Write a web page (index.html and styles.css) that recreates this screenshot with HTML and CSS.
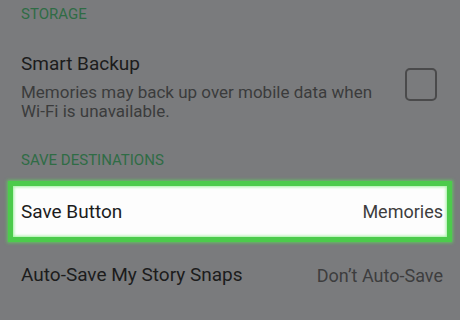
FILE: index.html
```html
<!DOCTYPE html>
<html lang="en">
<head>
  <meta charset="UTF-8">
  <meta name="viewport" content="width=device-width, initial-scale=1.0">
  <title>Settings - Memories</title>
  <link rel="stylesheet" href="styles.css">
</head>
<body>
  <!-- storage -->
  <div class="section-label first">STORAGE</div>

  <div class="setting check-row">
    <div class="setting-text">
      <div class="setting-title">Smart Backup</div>
      <div class="setting-desc">Memories may back up over mobile data when Wi-Fi is unavailable.</div>
    </div>
    <div class="checkbox"></div>
  </div>

  <!-- save destinations -->
  <div class="section-label">SAVE DESTINATIONS</div>

  <div class="setting value-row highlight">
    <div class="setting-title">Save Button</div>
    <div class="setting-value">Memories</div>
  </div>

  <div class="setting value-row">
    <div class="setting-title">Auto-Save My Story Snaps</div>
    <div class="setting-value">Don’t Auto-Save</div>
  </div>
</body>
</html>
```

FILE: styles.css
```css
:root {
  --bg: #7a7b7d;
  --label: #2f6c45;
  --title: #1c1c1c;
  --desc: #3b3b3c;
  --value: #3d3d3e;
  --green: #4ccb4c;
}

* {
  box-sizing: border-box;
  margin: 0;
  padding: 0;
}

body {
  width: 460px;
  height: 320px;
  overflow: hidden;
  background: var(--bg);
  font-family: Roboto, "Noto Sans", sans-serif;
  color: var(--title);
}

/* section headers */
.section-label {
  padding: 0 21px;
  font-size: 15px;
  line-height: 20px;
  color: var(--label);
  margin-top: 29px;
}

.section-label.first {
  margin-top: 4px;
}

/* rows */
.setting {
  display: flex;
  align-items: center;
  padding: 0 17px 0 21px;
}

.setting-title {
  font-size: 19px;
  line-height: 24px;
  color: var(--title);
}

.setting-desc {
  font-size: 17px;
  line-height: 19px;
  color: var(--desc);
  margin-top: 7px;
}

.check-row {
  margin-top: 28px;
  align-items: flex-start;
}

.setting-text {
  flex: 1;
  padding-right: 20px;
}

.checkbox {
  width: 32px;
  height: 33px;
  margin: 16px 6px 0 0;
  border: 2px solid #4a4a4b;
  border-radius: 5px;
  flex-shrink: 0;
}

.value-row {
  justify-content: space-between;
  height: 66px;
}

.setting-value {
  font-size: 18px;
  color: var(--value);
}

/* highlighted row */
.highlight {
  height: 61px;
  margin: 11px 8px 0 8px;
  padding: 0 4px 0 8px;
  background: #fdfdfd;
  border: 5px solid var(--green);
  box-shadow: 0 0 3px 1px rgba(90, 220, 90, 0.7), inset 0 0 3px 1px rgba(150, 240, 150, 0.9);
}
```
